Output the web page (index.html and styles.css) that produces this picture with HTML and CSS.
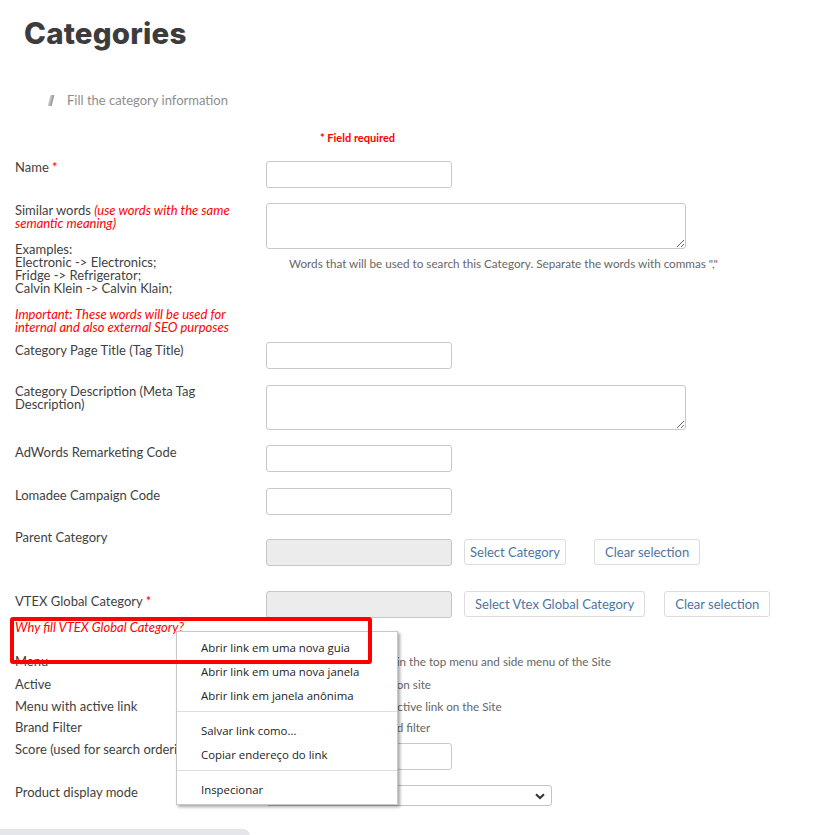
FILE: index.html
```html
<!DOCTYPE html>
<html lang="en">
<head>
<meta charset="utf-8">
<title>Categories</title>
<link rel="stylesheet" href="styles.css">
</head>
<body>
<div class="page">
  <h1 class="title">Categories</h1>
  <div class="section-head"><span class="bar"></span><span>Fill the category information</span></div>
  <p class="required">* Field required</p>

  <div class="form">
    <div class="row r-name">
      <div class="label">Name <span class="req">*</span></div>
      <div class="field"><input class="text" type="text"></div>
    </div>

    <div class="row r-similar">
      <div class="label">Similar words <em class="red">(use words with the same semantic meaning)</em><br><br>Examples:<br>Electronic -&gt; Electronics;<br>Fridge -&gt; Refrigerator;<br>Calvin Klein -&gt; Calvin Klain;<br><br><em class="red">Important: These words will be used for internal and also external SEO purposes</em></div>
      <div class="field">
        <textarea class="area"></textarea>
        <div class="hint">Words that will be used to search this Category. Separate the words with commas ","</div>
      </div>
    </div>

    <div class="row r-title">
      <div class="label">Category Page Title (Tag Title)</div>
      <div class="field"><input class="text" type="text"></div>
    </div>

    <div class="row r-desc">
      <div class="label">Category Description (Meta Tag Description)</div>
      <div class="field"><textarea class="area area-desc"></textarea></div>
    </div>

    <div class="row r-adwords">
      <div class="label">AdWords Remarketing Code</div>
      <div class="field"><input class="text" type="text"></div>
    </div>

    <div class="row r-lomadee">
      <div class="label">Lomadee Campaign Code</div>
      <div class="field"><input class="text" type="text"></div>
    </div>

    <div class="row r-parent">
      <div class="label">Parent Category</div>
      <div class="field field-buttons">
        <input class="text disabled" type="text" disabled>
        <button class="btn btn-select btn-narrow">Select Category</button>
        <button class="btn btn-clear">Clear selection</button>
      </div>
    </div>

    <div class="row r-vtex">
      <div class="label">VTEX Global Category <span class="req">*</span>
        <div class="why">Why fill VTEX Global Category?</div>
      </div>
      <div class="field field-buttons">
        <input class="text disabled" type="text" disabled>
        <button class="btn btn-select">Select Vtex Global Category</button>
        <button class="btn btn-clear-2">Clear selection</button>
      </div>
    </div>

    <div class="row r-check r-menu">
      <div class="label">Menu</div>
      <div class="field check"><input type="checkbox" class="cb"><span>Displays the category in the top menu and side menu of the Site</span></div>
    </div>

    <div class="row r-check r-active">
      <div class="label">Active</div>
      <div class="field check"><input type="checkbox" class="cb"><span>Displays the category on site</span></div>
    </div>

    <div class="row r-check r-activelink">
      <div class="label">Menu with active link</div>
      <div class="field check"><input type="checkbox" class="cb"><span>Shows the item with active link on the Site</span></div>
    </div>

    <div class="row r-check r-brand">
      <div class="label">Brand Filter</div>
      <div class="field check"><input type="checkbox" class="cb"><span>Enables category brand filter</span></div>
    </div>

    <div class="row r-score">
      <div class="label">Score (used for search ordering)</div>
      <div class="field"><input class="text" type="text"></div>
    </div>

    <div class="row r-display">
      <div class="label">Product display mode</div>
      <div class="field">
        <div class="select">
          <span class="select-value"></span>
          <svg class="chev" width="10" height="7" viewBox="0 0 10 7"><path d="M1 1.2 L5 5 L9 1.2" fill="none" stroke="#333" stroke-width="2"/></svg>
        </div>
      </div>
    </div>
  </div>

  <div class="footer-bar"></div>
</div>

<div class="ctx-menu">
  <div class="ctx-item">Abrir link em uma nova guia</div>
  <div class="ctx-item">Abrir link em uma nova janela</div>
  <div class="ctx-item">Abrir link em janela anônima</div>
  <div class="ctx-sep"></div>
  <div class="ctx-item">Salvar link como...</div>
  <div class="ctx-item">Copiar endereço do link</div>
  <div class="ctx-sep"></div>
  <div class="ctx-item">Inspecionar</div>
</div>

<div class="highlight"></div>
</body>
</html>
```

FILE: styles.css
```css
* { box-sizing: border-box; }

html, body { background: #fff; }

body {
  margin: 0;
  font-family: Lato, "Liberation Sans", sans-serif;
  color: #3f3f3f;
  overflow: hidden;
}

.page {
  padding-top: 15px;
  height: 835px;
}

.title {
  margin: 0 0 0 24px;
  font-family: Inter, Lato, sans-serif;
  font-size: 29.5px;
  line-height: 36px;
  font-weight: 800;
  letter-spacing: 0.2px;
  color: #3c3c3c;
}

.section-head {
  display: flex;
  align-items: center;
  gap: 14px;
  margin: 41px 0 0 49px;
  height: 16px;
  font-size: 13px;
  color: #8e8e8e;
}

.bar {
  display: inline-block;
  width: 4px;
  height: 11px;
  transform: skewX(-14deg);
  background: linear-gradient(90deg, #d6d6d6, #8f8f8f);
}

.required {
  margin: 23px 0 0 0;
  padding-left: 320px;
  font-size: 11px;
  line-height: 14px;
  font-weight: 700;
  color: #f00;
}

.form {
  margin-top: 16px;
  padding-left: 15px;
}

.row {
  display: grid;
  grid-template-columns: 251px auto;
  align-items: start;
  font-size: 13px;
  line-height: 13px;
}

.label { color: #3f3f3f; }

.req { color: #f00; }
.red { color: #f00; }

.text {
  display: block;
  width: 186px;
  height: 27px;
  border: 1px solid #c9c9c9;
  border-radius: 3px;
  background: #fff;
  margin: 0;
}

.text.disabled {
  background: #ececec;
  border-color: #c6c6c6;
}

.area {
  display: block;
  width: 420px;
  height: 46px;
  border: 1px solid #c9c9c9;
  border-radius: 3px;
  margin: 0;
  resize: both;
}

.area-desc { height: 45px; }

.hint {
  margin: 7px 0 0 23px;
  font-size: 11.7px;
  line-height: 14px;
  color: #666;
  white-space: nowrap;
}

/* vertical rhythm */
.r-name { margin-top: 0; }

.r-similar { margin-top: 15px; }
.r-similar .label { padding-top: 1px; }

.r-title { margin-top: 8px; }
.r-title .label { padding-top: 2px; }

.r-desc { margin-top: 16px; }
.r-desc .label { padding-right: 60px; }

.r-adwords { margin-top: 15px; }
.r-adwords .label { padding-top: 1px; }

.r-lomadee { margin-top: 16px; }
.r-lomadee .label { padding-top: 1px; }

.r-parent { margin-top: 16px; }
.r-parent .field { padding-top: 8px; }

.r-vtex { margin-top: 25px; }
.r-vtex .label { padding-top: 4px; }

.why {
  margin-top: 13px;
  color: #f00;
  font-style: italic;
}

.r-menu { margin-top: 21px; }
.r-active { margin-top: 10px; }
.r-activelink { margin-top: 9px; }
.r-brand { margin-top: 8px; }

.r-score { margin-top: 9px; }
.r-score .label { white-space: nowrap; }

.r-display { margin-top: 15px; }
.r-display .label { padding-top: 1px; }

.field-buttons {
  display: flex;
  align-items: flex-start;
}

.btn {
  height: 26px;
  margin: 0;
  padding: 0 10px;
  border: 1px solid #dcdcdc;
  border-radius: 3px;
  background: #fff;
  color: #4a76a3;
  font-family: Lato, "Liberation Sans", sans-serif;
  font-size: 13px;
  line-height: 24px;
}

.btn-narrow { padding: 0 5px; }

.btn-select { margin-left: 12px; }
.btn-clear { margin-left: 28px; }
.btn-clear-2 { margin-left: 19px; }

.check {
  display: flex;
  align-items: center;
  gap: 5px;
  font-size: 11.7px;
  line-height: 13px;
  color: #666;
  white-space: nowrap;
}

.cb {
  width: 13px;
  height: 13px;
  margin: 0;
}

.select {
  position: relative;
  width: 286px;
  height: 21px;
  border: 1px solid #c4c4c4;
  border-radius: 3px;
  background: #fff;
}

.chev {
  position: absolute;
  right: 6px;
  top: 7px;
}

.footer-bar {
  margin-top: 23px;
  width: 250px;
  height: 20px;
  background: #e4e6e9;
  border-top-right-radius: 7px;
}

/* context menu overlay */
.ctx-menu {
  position: absolute;
  left: 176px;
  top: 631px;
  width: 222px;
  height: 174px;
  padding: 4px 0 0 0;
  background: #fff;
  border: 1px solid #c8c8c8;
  box-shadow: 2px 2px 3px rgba(0, 0, 0, 0.35);
  font-family: "Open Sans", "Noto Sans", sans-serif;
  font-size: 11.4px;
  color: #222;
}

.ctx-item {
  height: 24px;
  line-height: 24px;
  padding-left: 24px;
  white-space: nowrap;
}

.ctx-sep {
  height: 1px;
  margin: 3px 0 7px 0;
  background: #dedede;
}

.highlight {
  position: absolute;
  left: 10px;
  top: 617px;
  width: 362px;
  height: 47px;
  border: 4px solid #f00;
  border-radius: 3px;
}
```
